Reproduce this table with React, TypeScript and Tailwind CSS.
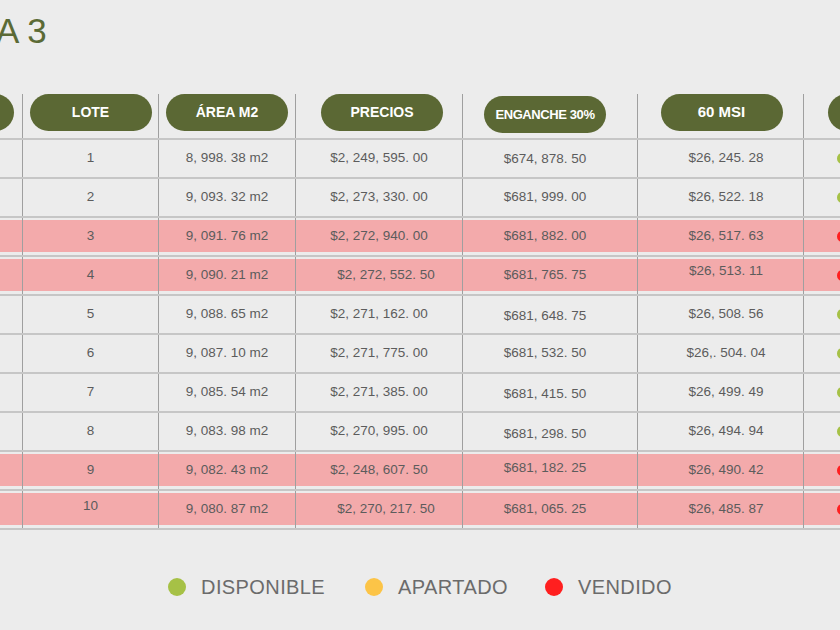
type Lot = {
  lote: string;
  area: string;
  precio: string;
  enganche: string;
  msi: string;
  sold: boolean;
  nudge?: Partial<Record<"lote" | "area" | "precio" | "enganche" | "msi", string>>;
};

const lots: Lot[] = [
  { lote: "1", area: "8, 998. 38 m2", precio: "$2, 249, 595. 00", enganche: "$674, 878. 50", msi: "$26, 245. 28", sold: false, nudge: { enganche: "mt-[3px]" } },
  { lote: "2", area: "9, 093. 32 m2", precio: "$2, 273, 330. 00", enganche: "$681, 999. 00", msi: "$26, 522. 18", sold: false },
  { lote: "3", area: "9, 091. 76 m2", precio: "$2, 272, 940. 00", enganche: "$681, 882. 00", msi: "$26, 517. 63", sold: true },
  { lote: "4", area: "9, 090. 21 m2", precio: "$2, 272, 552. 50", enganche: "$681, 765. 75", msi: "$26, 513. 11", sold: true, nudge: { precio: "ml-[14px]", msi: "-mt-[8px]" } },
  { lote: "5", area: "9, 088. 65 m2", precio: "$2, 271, 162. 00", enganche: "$681, 648. 75", msi: "$26, 508. 56", sold: false, nudge: { enganche: "mt-[4px]" } },
  { lote: "6", area: "9, 087. 10 m2", precio: "$2, 271, 775. 00", enganche: "$681, 532. 50", msi: "$26,. 504. 04", sold: false },
  { lote: "7", area: "9, 085. 54 m2", precio: "$2, 271, 385. 00", enganche: "$681, 415. 50", msi: "$26, 499. 49", sold: false, nudge: { enganche: "mt-[4px]" } },
  { lote: "8", area: "9, 083. 98 m2", precio: "$2, 270, 995. 00", enganche: "$681, 298. 50", msi: "$26, 494. 94", sold: false, nudge: { enganche: "mt-[6px]" } },
  { lote: "9", area: "9, 082. 43 m2", precio: "$2, 248, 607. 50", enganche: "$681, 182. 25", msi: "$26, 490. 42", sold: true, nudge: { enganche: "-mt-[4px]" } },
  { lote: "10", area: "9, 080. 87 m2", precio: "$2, 270, 217. 50", enganche: "$681, 065. 25", msi: "$26, 485. 87", sold: true, nudge: { lote: "-mt-[5px]", precio: "ml-[14px]" } },
];

const line = "shrink-0 border-r border-[#9f9f9f]";

function Pill({ children, className = "" }: { children?: React.ReactNode; className?: string }) {
  return (
    <div className={`flex h-[37px] w-[122px] shrink-0 items-center justify-center rounded-full bg-[#5b6834] font-bold text-white ${className}`}>
      {children}
    </div>
  );
}

function Cell({ width, fill, children, className = "" }: { width: string; fill: boolean; children?: React.ReactNode; className?: string }) {
  return (
    <div className={`${width} ${line} pt-[2px] pb-[3px]`}>
      <div className={`flex h-full items-center justify-center ${fill ? "bg-[#f3aaab]" : ""}`}>
        <span className={className}>{children}</span>
      </div>
    </div>
  );
}

export default function App() {
  return (
    <div className="h-[630px] w-[840px] overflow-hidden bg-[#ececec] font-['Liberation_Sans',sans-serif]">
      <h1 className="-ml-[4px] pt-[13px] text-[35px] leading-none text-[#5b6a35]">A 3</h1>

      <div className="mt-[46px] text-[13.5px] text-[#5c5c5c]">
        {/* header */}
        <div className="flex h-[46px] border-b-2 border-[#c6c6c6]">
          <div className={`w-[23px] ${line} flex justify-end overflow-hidden pr-[8px]`}>
            <Pill />
          </div>
          <div className={`w-[136px] ${line} flex justify-center`}>
            <Pill className="text-[14px]">LOTE</Pill>
          </div>
          <div className={`w-[137px] ${line} flex justify-center`}>
            <Pill className="text-[14px]">ÁREA M2</Pill>
          </div>
          <div className={`w-[167px] ${line} flex justify-center pl-[6px]`}>
            <Pill className="text-[14px]">PRECIOS</Pill>
          </div>
          <div className={`w-[175px] ${line} flex justify-center pr-[10px]`}>
            <Pill className="mt-[2px] text-[13px] tracking-[-0.4px]">ENGANCHE 30%</Pill>
          </div>
          <div className={`w-[166px] ${line} flex justify-center pl-[2px]`}>
            <Pill className="text-[15px]">60 MSI</Pill>
          </div>
          <div className="flex flex-1 overflow-hidden pl-[24px]">
            <Pill />
          </div>
        </div>

        {/* rows */}
        {lots.map((r) => (
          <div key={r.lote} className="flex h-[39px] border-b-2 border-[#c6c6c6]">
            <Cell width="w-[23px]" fill={r.sold} />
            <Cell width="w-[136px]" fill={r.sold} className={r.nudge?.lote}>{r.lote}</Cell>
            <Cell width="w-[137px]" fill={r.sold} className={r.nudge?.area}>{r.area}</Cell>
            <Cell width="w-[167px]" fill={r.sold} className={r.nudge?.precio}>{r.precio}</Cell>
            <Cell width="w-[175px]" fill={r.sold} className={`mr-[10px] ${r.nudge?.enganche ?? ""}`}>{r.enganche}</Cell>
            <Cell width="w-[166px]" fill={r.sold} className={`ml-[11px] ${r.nudge?.msi ?? ""}`}>{r.msi}</Cell>
            <div className="flex-1 pt-[2px] pb-[3px]">
              <div className={`flex h-full items-center pl-[33px] ${r.sold ? "bg-[#f3aaab]" : ""}`}>
                <span className={`h-[11px] w-[11px] shrink-0 rounded-full ${r.sold ? "bg-[#ff1f1f]" : "bg-[#a6c146]"}`} />
              </div>
            </div>
          </div>
        ))}
      </div>

      {/* legend */}
      <div className="mt-[42px] flex items-center justify-center text-[20px] tracking-[0.4px] text-[#6b6b6b]">
        <span className="h-[18px] w-[18px] rounded-full bg-[#a6c146]" />
        <span className="ml-[15px]">DISPONIBLE</span>
        <span className="ml-[40px] h-[18px] w-[18px] rounded-full bg-[#fcc447]" />
        <span className="ml-[15px]">APARTADO</span>
        <span className="ml-[37px] h-[18px] w-[18px] rounded-full bg-[#ff1f1f]" />
        <span className="ml-[15px]">VENDIDO</span>
      </div>
    </div>
  );
}
